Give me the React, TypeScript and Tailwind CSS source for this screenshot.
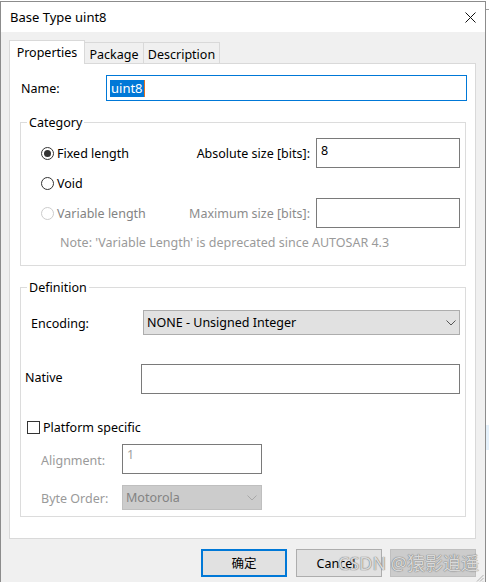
import React from "react";

function Radio({ checked, disabled }: { checked?: boolean; disabled?: boolean }) {
  return (
    <span
      className={
        "w-[13px] h-[13px] rounded-full border flex items-center justify-center shrink-0 bg-white " +
        (disabled ? "border-[#cccccc]" : "border-[#333333]")
      }
    >
      {checked ? <span className="w-[7px] h-[7px] rounded-full bg-[#333333]" /> : null}
    </span>
  );
}

function Chevron({ color }: { color: string }) {
  return (
    <svg width="10" height="6" viewBox="0 0 10 6" className="shrink-0">
      <path d="M0.5 0.5L5 5L9.5 0.5" fill="none" stroke={color} strokeWidth="1" />
    </svg>
  );
}

export default function App() {
  return (
    <div className="w-[489px] h-[582px] bg-white flex overflow-hidden font-['Noto_Sans','Noto_Sans_CJK_SC',sans-serif] text-[12.5px] leading-[17px] text-black relative">
      <div className="mt-[1px] w-[486px] h-[581px] flex flex-col border-l border-t border-r border-[#8c8c8c] shrink-0">
        {/* title bar */}
        <div className="h-[30px] bg-white flex items-center justify-between pl-[9px] pr-[9px] shrink-0">
          <span className="text-[13px]">Base Type uint8</span>
          <svg width="11" height="11" viewBox="0 0 11 11" className="mt-[1px]">
            <path d="M0.5 0.5L10.5 10.5M10.5 0.5L0.5 10.5" stroke="#111" strokeWidth="1" />
          </svg>
        </div>

        {/* body */}
        <div className="flex-1 bg-[#f0f0f0] pl-[8px] pr-[9px] pt-[8px] flex flex-col relative">
          {/* tabs */}
          <div className="flex items-end h-[23px]">
            <div className="w-[76px] h-[24px] -mb-px relative z-10 bg-white border-t border-l border-r border-[#d9d9d9] flex items-center justify-center">
              Properties
            </div>
            <div className="w-[59px] h-[21px] border-t border-r border-[#d9d9d9] flex items-center justify-center pt-[2px]">
              Package
            </div>
            <div className="w-[76px] h-[21px] border-t border-r border-[#d9d9d9] flex items-center justify-center pt-[2px]">
              Description
            </div>
          </div>

          {/* panel */}
          <div className="h-[476px] bg-white border border-[#d9d9d9] flex flex-col">
            {/* Name */}
            <div className="mt-[11px] flex items-center pl-[11px] pr-[8px]">
              <span className="w-[85px]">Name:</span>
              <div className="flex-1 h-[26px] border border-[#0078d7] flex items-center pl-[3px]">
                <span className="bg-[#0078d7] text-white px-[1px] h-[17px] flex items-center text-[13px]">uint8</span>
                <span className="w-px h-[17px] bg-[#e07020]" />
              </div>
            </div>

            {/* Category */}
            <div className="mt-[21px] ml-[10px] mr-[9px] h-[144px] border border-[#dcdcdc] relative pt-[15px] pl-[20px] pr-[5px]">
              <span className="absolute left-[6px] -top-[9px] bg-white px-[2px]">Category</span>
              <div className="flex items-center h-[30px]">
                <div className="w-[130px] flex items-center gap-[3px] whitespace-nowrap">
                  <Radio checked />
                  <span>Fixed length</span>
                </div>
                <div className="flex-1 text-right pr-[6px] whitespace-nowrap">Absolute size [bits]:</div>
                <div className="w-[144px] h-[30px] border border-[#7a7a7a] bg-white pl-[4px] pt-[3px]">8</div>
              </div>
              <div className="flex items-center h-[30px]">
                <div className="w-[130px] flex items-center gap-[3px]">
                  <Radio />
                  <span>Void</span>
                </div>
              </div>
              <div className="flex items-center h-[30px]">
                <div className="w-[130px] flex items-center gap-[3px] text-[#838383] whitespace-nowrap">
                  <Radio disabled />
                  <span>Variable length</span>
                </div>
                <div className="flex-1 text-right pr-[6px] text-[#8c8c8c] whitespace-nowrap">Maximum size [bits]:</div>
                <div className="w-[144px] h-[30px] border border-[#7a7a7a] bg-white" />
              </div>
              <div className="mt-[5px] h-[18px] flex items-center pl-[19px] text-[#9a9a9a] whitespace-nowrap">
                Note: 'Variable Length' is deprecated since AUTOSAR 4.3
              </div>
            </div>

            {/* Definition */}
            <div className="mt-[21px] ml-[10px] mr-[9px] h-[230px] border border-[#dcdcdc] relative pt-[22px] pr-[5px]">
              <span className="absolute left-[6px] -top-[9px] bg-white px-[2px]">Definition</span>
              <div className="flex items-center">
                <span className="w-[122px] pl-[10px] pt-[2px]">Encoding:</span>
                <div className="flex-1 h-[25px] bg-[#e1e1e1] border border-[#adadad] flex items-center justify-between pl-[3px] pr-[3px]">
                  <span>NONE - Unsigned Integer</span>
                  <Chevron color="#555555" />
                </div>
              </div>
              <div className="mt-[29px] flex items-center">
                <span className="w-[120px] pl-[4px] -mt-[3px]">Native</span>
                <div className="flex-1 h-[30px] border border-[#7a7a7a] bg-white" />
              </div>
              <div className="mt-[25px] h-[17px] flex items-center pl-[6px] gap-[3px]">
                <span className="w-[13px] h-[13px] border border-[#333333] bg-white shrink-0" />
                <span>Platform specific</span>
              </div>
              <div className="mt-[8px] flex items-center">
                <span className="w-[101px] pl-[20px] pt-[2px] text-[#9a9a9a]">Alignment:</span>
                <div className="w-[140px] h-[30px] border border-[#7a7a7a] bg-white pl-[4px] pt-[1px] text-[#a0a0a0]">1</div>
              </div>
              <div className="mt-[11px] flex items-center">
                <span className="w-[101px] pl-[20px] pt-[1px] text-[#9a9a9a]">Byte Order:</span>
                <div className="w-[140px] h-[25px] bg-[#cccccc] border border-[#bfbfbf] flex items-center justify-between pl-[3px] pr-[4px] text-[#838383]">
                  <span>Motorola</span>
                  <Chevron color="#a8a8a8" />
                </div>
              </div>
            </div>
          </div>

          {/* buttons */}
          <div className="mt-[10px] flex justify-end">
            <div className="w-[86px] h-[28px] bg-[#e1e1e1] border-2 border-[#0078d7] flex items-center justify-center">
              确定
            </div>
            <div className="ml-[9px] w-[86px] h-[28px] bg-[#e1e1e1] border border-[#adadad] flex items-center justify-center pr-[6px]">
              Cancel
            </div>
            <div className="ml-[8px] w-[86px] h-[28px] bg-[#cccccc] border border-[#bfbfbf]" />
          </div>

          {/* resize grip */}
          <svg width="8" height="8" viewBox="0 0 8 8" className="absolute right-[1px] bottom-0">
            <path d="M7.5 1L1 7.5M7.5 4L4 7.5M7.5 7L7 7.5" stroke="#b0b0b0" strokeWidth="1" />
          </svg>
        </div>
      </div>

      {/* outside strip */}
      <div className="flex-1 flex flex-col">
        <div className="mt-[9px] h-px bg-[#a0a0a0]" />
        <div className="mt-[415px] h-[25px] bg-[#e5f1fb]" />
      </div>

      {/* watermark */}
      <div className="absolute left-[338px] top-[551px] text-[18px] leading-[24px] text-[#d9d9d9] [text-shadow:0_0_1px_#7a7a7a,0_0_1px_#7a7a7a] whitespace-nowrap">
        CSDN @猿影逍遥
      </div>
    </div>
  );
}
